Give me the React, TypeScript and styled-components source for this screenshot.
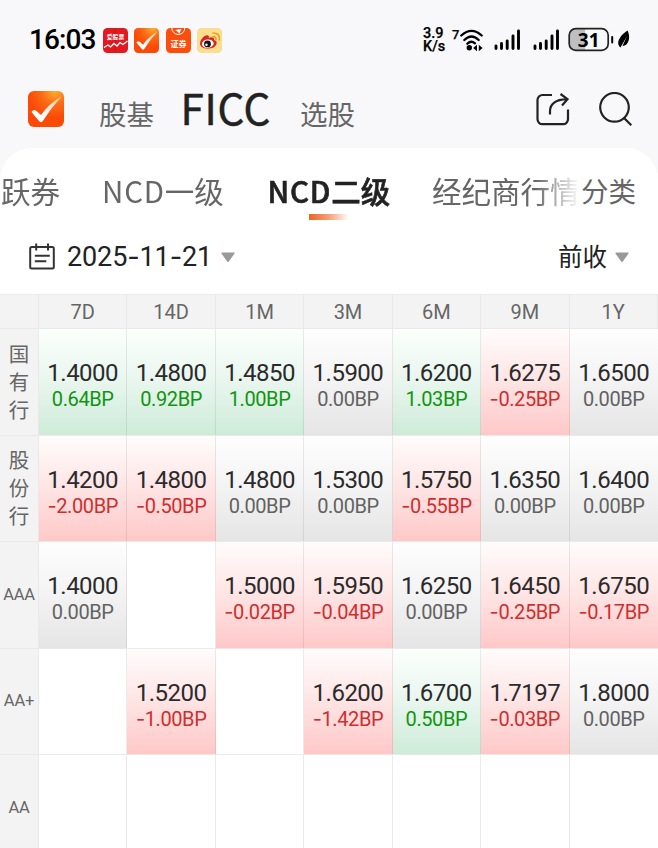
import React from 'react';
import styled, { createGlobalStyle } from 'styled-components';

const CJK = '"Noto Sans CJK SC", sans-serif';
const NUM = 'Roboto, "Noto Sans CJK SC", sans-serif';

const Global = createGlobalStyle`
  * { box-sizing: border-box; }
  body { margin: 0; background: #f8f8fa; font-family: ${CJK}; }
`;

const Screen = styled.div`
  width: 658px;
  height: 848px;
  overflow: hidden;
  display: flex;
  flex-direction: column;
  background: #f8f8fa;
  color: #222;
`;

const StatusBar = styled.header`
  height: 80px;
  flex: none;
  padding: 0 28px 0 29px;
  display: flex;
  align-items: center;
  color: #000;
`;

const Clock = styled.div`
  width: 74px;
  font: 500 28px/40px ${NUM};
  letter-spacing: -0.9px;
  white-space: nowrap;
`;

const AppIcons = styled.div`
  display: flex;
  gap: 6.4px;
  svg { display: block; }
`;

const StatusRight = styled.div`
  margin-left: auto;
  display: flex;
  align-items: center;
  svg { display: block; }
`;

const Speed = styled.div`
  width: 29px;
  font: 500 14.5px/13px ${NUM};
  -webkit-text-stroke: 0.25px #000;
  white-space: nowrap;
`;

const SpeedLine = styled.div`
  height: 13px;
`;

const Generation = styled.div`
  width: 8px;
  height: 24px;
  font: 500 13px/14px ${NUM};
  -webkit-text-stroke: 0.25px #000;
`;

const Signals = styled.div`
  display: flex;
  gap: 11px;
  margin: 0 8px 0 10px;
`;

const TitleBar = styled.nav`
  height: 68px;
  flex: none;
  padding: 0 25px 0 28px;
  display: flex;
  align-items: center;
`;

const Logo = styled.div`
  width: 71px;
  margin-top: -11px;
  svg { display: block; }
`;

const Section = styled.span<{ $active?: boolean }>`
  font: 400 ${p => (p.$active ? 42 : 27.5)}px/56px ${CJK};
  letter-spacing: ${p => (p.$active ? 0.7 : 0)}px;
  color: ${p => (p.$active ? '#222' : '#666')};
  -webkit-text-stroke: ${p => (p.$active ? '0.5px #222' : '0')};
  width: ${p => (p.$active ? 119.5 : 81.5)}px;
  margin-top: ${p => (p.$active ? -14 : -3)}px;
  white-space: nowrap;
`;

const TitleActions = styled.div`
  margin-left: auto;
  display: flex;
  gap: 28px;
  margin-top: -9px;
  svg { display: block; }
`;

const Panel = styled.main`
  flex: 1;
  min-height: 0;
  border-radius: 32px 32px 0 0;
  background: #fff;
  overflow: hidden;
  display: flex;
  flex-direction: column;
`;

const TabRow = styled.div`
  height: 76px;
  flex: none;
  display: flex;
  align-items: flex-start;
  padding-top: 19px;
`;

const TabStrip = styled.div`
  width: 577px;
  height: 56px;
  overflow: hidden;
  display: flex;
  flex: none;
  padding-left: 1px;
  mask-image: linear-gradient(90deg, #000 535px, transparent 580px);
`;

const Tab = styled.div<{ $w: number; $active?: boolean }>`
  position: relative;
  width: ${p => p.$w}px;
  flex: none;
  font: ${p => (p.$active ? 500 : 400)} 29.5px/46px ${CJK};
  -webkit-text-stroke: ${p => (p.$active ? '0.6px #222' : '0')};
  color: ${p => (p.$active ? '#222' : '#666')};
  white-space: nowrap;
`;

const Latin = styled.span`
  letter-spacing: 0.8px;
`;

const Underline = styled.i`
  position: absolute;
  left: 41px;
  top: 47px;
  width: 40px;
  height: 6px;
  background: linear-gradient(90deg, #ec6423, #f5a07a 50%, #fff);
`;

const Category = styled.div`
  font: 400 27.5px/46px ${CJK};
  color: #666;
  padding-left: 4px;
`;

const Filters = styled.div`
  height: 70px;
  flex: none;
  display: flex;
  align-items: center;
  padding: 0 29px 4px 28px;
  svg { display: block; }
`;

const DateText = styled.div`
  margin-left: 11px;
  width: 153.5px;
  font: 400 27px/36px ${NUM};
  letter-spacing: -0.12px;
  white-space: nowrap;
`;

const Hyphen = styled.span`
  font-family: Inter, sans-serif;
`;

const Basis = styled.div`
  margin-left: auto;
  margin-right: 8px;
  margin-top: -2px;
  font: 400 24.5px/36px ${CJK};
`;

const Table = styled.div`
  width: 658px;
  flex: none;
  display: grid;
  grid-template-columns: 39px repeat(7, 88.43px);
  grid-template-rows: 35px repeat(5, 106.5px);
`;

const Head = styled.div`
  background: #f3f3f3;
  border-top: 1px solid #ebebeb;
  border-right: 1px solid #e9e9e9;
  border-bottom: 1px solid #e9e9e9;
  color: #666;
  font: 400 20px/34px ${NUM};
  text-align: center;
`;

const RowLabel = styled.div<{ $latin?: boolean }>`
  background: #f3f3f3;
  border-right: 1px solid #e9e9e9;
  border-bottom: 1px solid #e9e9e9;
  color: #666;
  display: flex;
  flex-direction: column;
  justify-content: center;
  align-items: center;
  padding-bottom: ${p => (p.$latin ? 0 : 2)}px;
  font: 400 ${p => (p.$latin ? '16.5px/28px ' + NUM : '20.5px/28px ' + CJK)};
  letter-spacing: ${p => (p.$latin ? '-0.2px' : '0')};
`;

type Tone = 'up' | 'down' | 'flat' | 'none';
const fills: Record<Tone, string> = {
  up: 'linear-gradient(#fcfffd, #e8f6ee 50%, #ceebd9)',
  down: 'linear-gradient(#fffcfc, #ffe4e4 50%, #ffc8c8)',
  flat: 'linear-gradient(#fefefe, #f3f3f3 50%, #e5e5e5)',
  none: '#fff',
};
const inks: Record<Tone, string> = { up: '#109510', down: '#cf2e2e', flat: '#626262', none: '#fff' };

const Cell = styled.div<{ $tone: Tone; $last: boolean }>`
  border-right: ${p => (p.$last ? 0 : 1)}px solid rgba(0, 0, 0, 0.08);
  border-bottom: 1px solid rgba(0, 0, 0, 0.08);
  background: ${p => fills[p.$tone]};
  text-align: center;
  padding-top: 31px;
  white-space: nowrap;
`;

const Rate = styled.div`
  font: 400 24px/26px ${NUM};
  letter-spacing: -0.5px;
  color: #2b2b2b;
`;

const Change = styled.div<{ $tone: Tone }>`
  font: 400 20px/26px ${NUM};
  letter-spacing: -0.4px;
  color: ${p => inks[p.$tone]};
`;

const terms = ['7D', '14D', '1M', '3M', '6M', '9M', '1Y'];
type Quote = [string, string] | null;
const rows: { label: string; quotes: Quote[] }[] = [
  { label: '国有行', quotes: [['1.4000', '0.64'], ['1.4800', '0.92'], ['1.4850', '1.00'], ['1.5900', '0.00'], ['1.6200', '1.03'], ['1.6275', '-0.25'], ['1.6500', '0.00']] },
  { label: '股份行', quotes: [['1.4200', '-2.00'], ['1.4800', '-0.50'], ['1.4800', '0.00'], ['1.5300', '0.00'], ['1.5750', '-0.55'], ['1.6350', '0.00'], ['1.6400', '0.00']] },
  { label: 'AAA', quotes: [['1.4000', '0.00'], null, ['1.5000', '-0.02'], ['1.5950', '-0.04'], ['1.6250', '0.00'], ['1.6450', '-0.25'], ['1.6750', '-0.17']] },
  { label: 'AA+', quotes: [null, ['1.5200', '-1.00'], null, ['1.6200', '-1.42'], ['1.6700', '0.50'], ['1.7197', '-0.03'], ['1.8000', '0.00']] },
  { label: 'AA', quotes: [null, null, null, null, null, null, null] },
];

const toneOf = (q: Quote): Tone => {
  if (!q) return 'none';
  const n = parseFloat(q[1]);
  return n > 0 ? 'up' : n < 0 ? 'down' : 'flat';
};

function Hyphenated({ text }: { text: string }) {
  return <>{text.split(/(-)/).map((s, i) => (s === '-' ? <Hyphen key={i}>-</Hyphen> : s))}</>;
}

function CheckLogo({ size, id }: { size: number; id: string }) {
  return (
    <svg width={size} height={size} viewBox="0 0 36 36">
      <defs>
        <radialGradient id={id} cx="0.75" cy="0" r="0.75">
          <stop offset="0" stopColor="#fbb02c" />
          <stop offset="0.5" stopColor="#fb6c16" />
          <stop offset="1" stopColor="#fb4a06" />
        </radialGradient>
        <linearGradient id={id + 'c'} x1="0" y1="1" x2="1" y2="0">
          <stop offset="0.3" stopColor="#fff" />
          <stop offset="1" stopColor="#ffc79c" />
        </linearGradient>
      </defs>
      <rect width="36" height="36" rx="6" fill={`url(#${id})`} />
      <path d="M3.500 21Q5.500 17.500 8.500 20L13 24Q21 12.500 33.500 5.500Q23 17 14.500 30.500Q12.500 32 11 30Z" fill={`url(#${id}c)`} />
    </svg>
  );
}

function StockIcon() {
  return (
    <svg width="25" height="25" viewBox="0 0 25 25">
      <rect width="25" height="25" rx="4.500" fill="#e01a20" />
      <path d="M12.500 0v25" stroke="#b90f16" strokeWidth="0.500" />
      <text x="12.500" y="10.800" textAnchor="middle" fontFamily={CJK} fontWeight="700" fontSize="5.800" fill="#fff">爱股票</text>
      <path d="M1 19.500L5 17l2.500 2L11 15.500l3 2.500 3-3.500 3 2 4.500-3.500" fill="none" stroke="#fff" strokeWidth="1.300" />
    </svg>
  );
}

function SecuritiesIcon() {
  return (
    <svg width="25" height="25" viewBox="0 0 25 25">
      <rect width="25" height="25" rx="4.500" fill="#fb4e0c" />
      <path d="M5.800 0A6.500 6.500 0 0 0 18.800 0" fill="none" stroke="#fff" strokeWidth="1" />
      <path d="M9 2l6.500-1-2.500 5-.8-2z" fill="#fff" />
      <text x="12.500" y="19" textAnchor="middle" fontFamily={CJK} fontWeight="700" fontSize="8" fill="#fff">证券</text>
    </svg>
  );
}

function WeiboIcon() {
  return (
    <svg width="25" height="25" viewBox="0 0 25 25">
      <rect x="0.250" y="0.250" width="24.500" height="24.500" rx="4.500" fill="#fbdf8c" stroke="#ead08a" strokeWidth="0.500" />
      <path d="M3 15.500C3 11.500 8 6.500 11 7.500c1.200.4 1 1.500.8 2.300 3-1.300 6-.8 5.200 2.200 2.500.7 3 2 2.500 3.700C18.500 22 3 22.500 3 15.500z" fill="#dc2427" />
      <ellipse cx="10.800" cy="15.700" rx="5.900" ry="4.200" fill="#fff" transform="rotate(-8 10.800 15.700)" />
      <circle cx="10.500" cy="15.900" r="3.400" fill="#111" />
      <circle cx="9.500" cy="16.800" r="1.200" fill="#fff" />
      <path d="M16 8.700q3.300-.4 3 3M16 5q7-.2 6.500 7" fill="none" stroke="#f09a21" strokeWidth="1.600" strokeLinecap="round" />
    </svg>
  );
}

function Wifi() {
  return (
    <svg width="23" height="24" viewBox="0 0 23 24">
      <g fill="none" stroke="#000" strokeWidth="2.300" strokeLinecap="round">
        <path d="M1.300 7.500Q11.500-1.800 21.700 7.500" />
        <path d="M4.300 12Q11.500 5 18.700 12" />
        <path d="M7.300 15.800Q11 12 15 15.300" />
      </g>
      <circle cx="9.300" cy="19.700" r="2.700" />
      <path d="M13.200 20l3.800-3.200v6.400zM22.600 20l-3.800-3.200v6.400z" />
    </svg>
  );
}

function Signal() {
  return (
    <svg width="28" height="22" viewBox="0 0 28 22">
      <path
        d="M3 19.500v-2.500M8.500 19.500v-5M14.200 19.500v-7.500M20 19.500V7M25.500 19.500V2"
        stroke="#000" strokeWidth="2.900" strokeLinecap="round"
      />
    </svg>
  );
}

function Battery() {
  return (
    <svg width="62" height="26" viewBox="0 0 62 26">
      <path d="M17 2H8a6 6 0 0 0-6 6v9a6 6 0 0 0 6 6h9z" fill="#bfbfc1" />
      <rect x="1.200" y="1.700" width="39" height="21.600" rx="6.500" fill="none" stroke="#222" strokeWidth="1.700" />
      <text x="20.700" y="19.500" textAnchor="middle" fontFamily="Noto Sans" fontWeight="700" fontSize="19">31</text>
      <path d="M44.200 10v5.500" stroke="#000" strokeWidth="2" strokeLinecap="round" />
      <path d="M59.500 3.500C63 10 60.500 19 54.500 19L59 9 52.500 20.500C47.500 17 51 9 59.500 3.500z" />
    </svg>
  );
}

function Share() {
  return (
    <svg width="34" height="36" viewBox="0 0 34 36" fill="none" stroke="#222" strokeWidth="2.200">
      <path d="M16 3H6.500A5 5 0 0 0 1.500 8V27A5 5 0 0 0 6.500 32.200H27A5 5 0 0 0 32 27V17.500" />
      <path d="M14 22.500V19Q14.500 8 30.500 7.200M24.500 2L31.500 7.200 26 13.500" />
    </svg>
  );
}

function Search() {
  return (
    <svg width="35" height="36" viewBox="0 0 35 36" fill="none" stroke="#222" strokeWidth="2.200">
      <circle cx="16.500" cy="15.300" r="14.300" />
      <path d="M25.500 25.500L33.300 33.300" />
    </svg>
  );
}

function Calendar() {
  return (
    <svg width="28" height="28" viewBox="0 0 28 28" fill="none" stroke="#333" strokeWidth="2">
      <rect x="2.200" y="4" width="23.600" height="21.500" rx="1.500" />
      <path d="M8.200 0.500v7M20 0.500v7M6.800 12.800h15M6.800 18.300h11.500" />
    </svg>
  );
}

function Caret() {
  return (
    <svg width="14" height="11" viewBox="0 0 14 11">
      <path d="M1 .5h12q1 .2.400 1.200L7.800 9.600q-.8 1-1.600 0L.6 1.700Q0 .7 1 .5z" fill="#999" />
    </svg>
  );
}

export default function App() {
  return (
    <Screen>
      <Global />
      <StatusBar>
        <Clock>16:03</Clock>
        <AppIcons>
          <StockIcon />
          <CheckLogo size={25} id="mini" />
          <SecuritiesIcon />
          <WeiboIcon />
        </AppIcons>
        <StatusRight>
          <Speed>
            <SpeedLine>3.9</SpeedLine>
            <SpeedLine>K/s</SpeedLine>
          </Speed>
          <Generation>7</Generation>
          <Wifi />
          <Signals><Signal /><Signal /></Signals>
          <Battery />
        </StatusRight>
      </StatusBar>
      <TitleBar>
        <Logo><CheckLogo size={36} id="logo" /></Logo>
        <Section>股基</Section>
        <Section $active>FICC</Section>
        <Section>选股</Section>
        <TitleActions><Share /><Search /></TitleActions>
      </TitleBar>
      <Panel>
        <TabRow>
          <TabStrip>
            <Tab $w={101}>跃券</Tab>
            <Tab $w={165.500}><Latin>NCD</Latin>一级</Tab>
            <Tab $w={164.500} $active><Latin>NCD</Latin>二级<Underline /></Tab>
            <Tab $w={150}>经纪商行情</Tab>
          </TabStrip>
          <Category>分类</Category>
        </TabRow>
        <Filters>
          <Calendar />
          <DateText><Hyphenated text="2025-11-21" /></DateText>
          <Caret />
          <Basis>前收</Basis>
          <Caret />
        </Filters>
        <Table>
          <Head />
          {terms.map(t => <Head key={t}>{t}</Head>)}
          {rows.map(r => {
            const latin = r.label.startsWith('A');
            return (
              <React.Fragment key={r.label}>
                <RowLabel $latin={latin}>
                  {latin ? r.label : [...r.label].map(c => <span key={c}>{c}</span>)}
                </RowLabel>
                {r.quotes.map((q, i) => (
                  <Cell key={i} $tone={toneOf(q)} $last={i === 6}>
                    {q && <Rate>{q[0]}</Rate>}
                    {q && <Change $tone={toneOf(q)}><Hyphenated text={q[1] + 'BP'} /></Change>}
                  </Cell>
                ))}
              </React.Fragment>
            );
          })}
        </Table>
      </Panel>
    </Screen>
  );
}
